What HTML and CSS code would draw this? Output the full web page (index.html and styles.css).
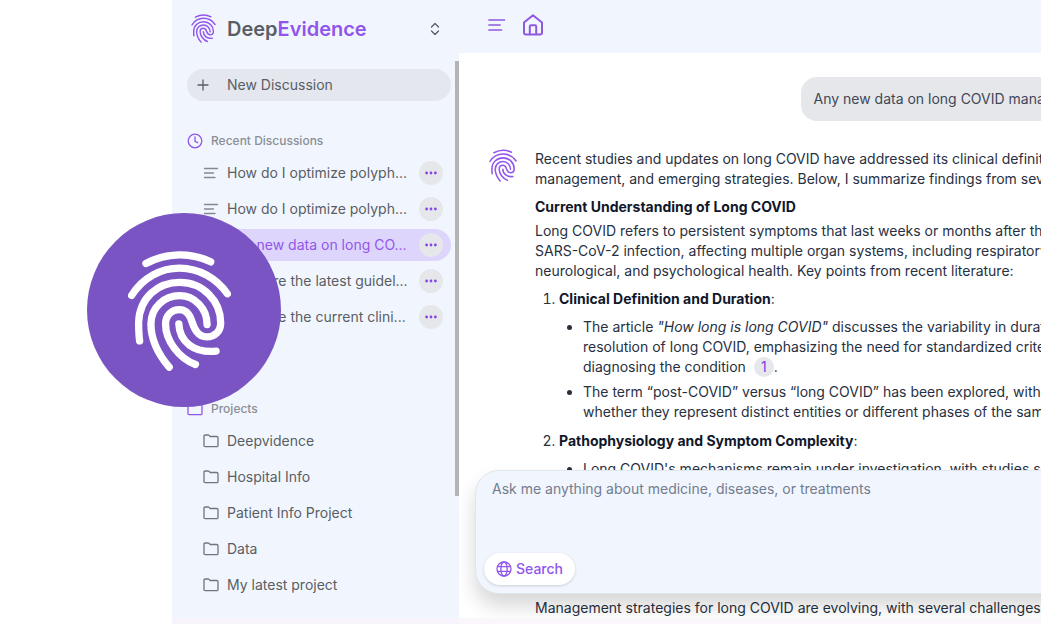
FILE: index.html
```html
<!DOCTYPE html>
<html lang="en">
<head>
<meta charset="utf-8">
<title>DeepEvidence</title>
<link rel="stylesheet" href="styles.css">
</head>
<body>
<svg class="sprite" aria-hidden="true">
  <symbol id="fingerprint" viewBox="145 133 310 363">
    <path d="M199 173C262 139 335 139 394 168"/>
    <path d="M156 269C190 215 245 187 300 187C360 187 412 218 444 264"/>
    <path d="M180 406C177 385 177 365 177 350C180 275 235 230 301 230C370 230 424 285 424 352C424 378 406 394 382 394C355 394 345 370 338 350C331 325 320 312 300 312C275 312 258 330 258 355C258 405 298 458 348 477"/>
    <path d="M269 485C235 445 214 405 214 355C214 305 255 270 300 270C345 270 383 308 383 357"/>
    <path d="M298 355C300 410 345 443 410 437"/>
  </symbol>
  <symbol id="lines" viewBox="0 0 16 16"><path d="M1.500 3.500h13M1.500 8h9M1.500 12.500h10.500"/></symbol>
  <symbol id="dots" viewBox="0 0 16 16"><circle cx="3" cy="8" r="1.600"/><circle cx="8" cy="8" r="1.600"/><circle cx="13" cy="8" r="1.600"/></symbol>
  <symbol id="folder" viewBox="0 0 16 16"><path d="M1 12.500V3.200Q1 2 2.200 2h2.900q.6 0 1 .4l1 1.100h6.500q1.400 0 1.400 1.400v7.600q0 1.200-1.200 1.200H2.200Q1 13.700 1 12.500z"/></symbol>
</svg>

<div class="app">
  <aside class="sidebar">
    <header class="brand">
      <svg class="brand-logo"><use href="#fingerprint"/></svg>
      <h1 class="brand-name">Deep<span class="accent">Evidence</span></h1>
      <button class="icon-button switcher" aria-label="Switch workspace">
        <svg class="icon" viewBox="0 0 16 16"><path d="M4.500 6 8 2.500 11.500 6M4.500 10 8 13.500 11.500 10"/></svg>
      </button>
    </header>
    <div class="sidebar-body">
      <nav class="nav">
        <button class="new-discussion">
          <svg class="icon" viewBox="0 0 16 16"><path d="M8 3v10M3 8h10"/></svg>
          New Discussion
        </button>

        <section class="group recent">
          <h2 class="group-title">
            <svg class="icon accent" viewBox="0 0 16 16"><circle cx="8" cy="8" r="6.800"/><path d="M8 4v4.300l2.600 1.300"/></svg>
            Recent Discussions
          </h2>
          <ul class="rows">
            <li class="row"><svg class="icon list-icon"><use href="#lines"/></svg><a class="row-link" href="#">How do I optimize polyph...</a><button class="more" aria-label="More options"><svg class="icon"><use href="#dots"/></svg></button></li>
            <li class="row"><svg class="icon list-icon"><use href="#lines"/></svg><a class="row-link" href="#">How do I optimize polyph...</a><button class="more" aria-label="More options"><svg class="icon"><use href="#dots"/></svg></button></li>
            <li class="row row-active"><svg class="icon list-icon"><use href="#lines"/></svg><a class="row-link" href="#">Any new data on long CO...</a><button class="more" aria-label="More options"><svg class="icon"><use href="#dots"/></svg></button></li>
            <li class="row"><svg class="icon list-icon"><use href="#lines"/></svg><a class="row-link" href="#">What are the latest guidel...</a><button class="more" aria-label="More options"><svg class="icon"><use href="#dots"/></svg></button></li>
            <li class="row"><svg class="icon list-icon"><use href="#lines"/></svg><a class="row-link" href="#">What are the current clini...</a><button class="more" aria-label="More options"><svg class="icon"><use href="#dots"/></svg></button></li>
          </ul>
        </section>

        <section class="group projects">
          <h2 class="group-title"><svg class="icon accent"><use href="#folder"/></svg>Projects</h2>
          <ul class="rows">
            <li class="row"><svg class="icon folder-icon"><use href="#folder"/></svg><a class="row-link" href="#">Deepvidence</a></li>
            <li class="row"><svg class="icon folder-icon"><use href="#folder"/></svg><a class="row-link" href="#">Hospital Info</a></li>
            <li class="row"><svg class="icon folder-icon"><use href="#folder"/></svg><a class="row-link" href="#">Patient Info Project</a></li>
            <li class="row"><svg class="icon folder-icon"><use href="#folder"/></svg><a class="row-link" href="#">Data</a></li>
            <li class="row"><svg class="icon folder-icon"><use href="#folder"/></svg><a class="row-link" href="#">My latest project</a></li>
          </ul>
        </section>
      </nav>
      <div class="scroll-thumb"></div>
    </div>
  </aside>

  <main class="main">
    <header class="toolbar">
      <button class="icon-button" aria-label="Toggle sidebar">
        <svg class="toolbar-menu" viewBox="0 0 18 14"><path d="M1 2h15.500M1 7h11M1 12h12.500"/></svg>
      </button>
      <button class="icon-button" aria-label="Home">
        <svg class="toolbar-home" viewBox="0 0 22 22"><path d="M2 8.500 11 1.200l9 7.300V18.500q0 2-2 2H4q-2 0-2-2zM7.800 20.500v-8q0-1.200 1.200-1.200h4q1.200 0 1.200 1.200v8"/></svg>
      </button>
    </header>

    <div class="conversation">
      <p class="question">Any new data on long COVID management?</p>
      <article class="answer">
        <svg class="avatar"><use href="#fingerprint"/></svg>
        <div class="prose">
          <p>Recent studies and updates on long COVID have addressed its clinical definition,<br>management, and emerging strategies. Below, I summarize findings from several</p>
          <h3>Current Understanding of Long COVID</h3>
          <p>Long COVID refers to persistent symptoms that last weeks or months after the<br>SARS-CoV-2 infection, affecting multiple organ systems, including respiratory,<br>neurological, and psychological health. Key points from recent literature:</p>
          <ol>
            <li><strong>Clinical Definition and Duration</strong>:
              <ul>
                <li>The article <em>"How long is long COVID"</em> discusses the variability in duration<br>resolution of long COVID, emphasizing the need for standardized criteria<br>diagnosing the condition <a class="cite" href="#">1</a>.</li>
                <li>The term “post-COVID” versus “long COVID” has been explored, with<br>whether they represent distinct entities or different phases of the same</li>
              </ul>
            </li>
            <li><strong>Pathophysiology and Symptom Complexity</strong>:
              <ul>
                <li>Long COVID's mechanisms remain under investigation, with studies suggesting</li>
              </ul>
            </li>
          </ol>
          <p class="management">Management strategies for long COVID are evolving, with several challenges</p>
        </div>
      </article>
    </div>

    <form class="composer">
      <textarea class="prompt" aria-label="Message" placeholder="Ask me anything about medicine, diseases, or treatments"></textarea>
      <button class="search" type="button">
        <svg class="icon" viewBox="0 0 16 16"><circle cx="8" cy="8" r="7"/><ellipse cx="8" cy="8" rx="3.200" ry="7"/><path d="M1.500 5.700h13M1.500 10.300h13"/></svg>
        Search
      </button>
    </form>
  </main>

  <div class="badge"><svg class="badge-print"><use href="#fingerprint"/></svg></div>
</div>
</body>
</html>
```

FILE: styles.css
```css
* { box-sizing: border-box; }

body {
  margin: 0;
  background: #fff;
  color: #28303f;
  font: 14px/20px Inter, sans-serif;
}

h1, h2, h3, p, ul, ol { margin: 0; padding: 0; font-size: inherit; }
button { border: 0; padding: 0; background: none; font: inherit; color: inherit; }
a { color: inherit; text-decoration: none; }
svg { display: block; flex: none; fill: none; stroke: currentColor; stroke-linecap: round; stroke-linejoin: round; }

.sprite { position: absolute; width: 0; height: 0; }
.icon { width: 16px; height: 16px; stroke-width: 1.3; }
.accent { color: #9155ec; }

.app {
  position: relative;
  display: flex;
  height: 100vh;
  padding-left: 172px;
  overflow: hidden;
}

/* Sidebar */
.sidebar {
  display: flex;
  flex-direction: column;
  flex: none;
  width: 287px;
  background: #f1f6fe;
  border-bottom: 6px solid #f7f4fb;
  color: #5a5e64;
}
.brand {
  display: flex;
  align-items: center;
  height: 61px;
  padding: 0 16px 4px 19px;
}
.brand-logo { width: 25px; height: 29px; stroke-width: 18; color: #9155ec; }
.brand-name { flex: 1; margin-left: 11px; font-size: 20px; line-height: 28px; font-weight: 600; }
.switcher { width: 16px; height: 16px; }

.sidebar-body { display: flex; align-items: flex-start; }
.nav { flex: 1; min-width: 0; padding: 8px 4px 0 15px; }
.scroll-thumb { width: 4px; height: 435px; background: #b4b4b5; }

.new-discussion {
  display: flex;
  align-items: center;
  gap: 16px;
  width: 100%;
  height: 32px;
  padding: 0 8px;
  border-radius: 16px;
  background: #e4e7ee;
}
.recent { margin-top: 30px; }
.projects { margin-top: 66px; }
.group-title {
  display: flex;
  align-items: center;
  gap: 8px;
  font-size: 12px;
  font-weight: 500;
  color: #8a8e95;
}
.rows {
  display: flex;
  flex-direction: column;
  gap: 4px;
  margin-top: 6px;
  list-style: none;
}
.row {
  display: flex;
  align-items: center;
  gap: 8px;
  height: 32px;
  padding: 0 8px 0 16px;
  border-radius: 16px;
}
.row-active { background: #ded5fc; color: #9155ec; }
.row-link { flex: 1; white-space: nowrap; }
.list-icon { color: #85888f; }
.folder-icon { color: #70747b; }
.more {
  display: grid;
  place-items: center;
  width: 24px;
  height: 24px;
  border-radius: 50%;
  background: #e6e7eb;
  color: #8348e4;
}
.more .icon { width: 14px; height: 14px; fill: currentColor; stroke: none; }

/* Main column */
.main {
  position: relative;
  display: flex;
  flex-direction: column;
  flex: 1;
  min-width: 0;
  overflow: hidden;
  border-bottom: 6px solid #faf6fb;
}
.toolbar {
  display: flex;
  align-items: center;
  flex: none;
  gap: 16px;
  height: 53px;
  padding: 0 29px 3px;
  background: #f1f6fe;
  color: #8f58e0;
}
.toolbar-menu { width: 18px; height: 14px; stroke-width: 1.7; }
.toolbar-home { width: 22px; height: 22px; stroke-width: 2; }

.conversation {
  display: flex;
  flex-direction: column;
  gap: 28px;
  min-width: 660px;
  padding: 24px 5px 0 30px;
  white-space: nowrap;
}
.question {
  align-self: flex-end;
  padding: 12px;
  border-radius: 16px;
  background: #e5e7eb;
  color: #414858;
}
.answer { display: flex; gap: 18px; }
.avatar { width: 28px; height: 33px; stroke-width: 17; color: #9155ec; }
.prose { flex: 1; }
.prose h3, .prose strong { font-weight: 700; color: #10172a; }
.prose h3 { margin: 8px 0 4px; }
.prose ol { margin-top: 8px; padding-left: 24px; }
.prose ol > li + li { margin-top: 9px; }
.prose ul { margin-top: 8px; padding-left: 24px; list-style: disc; }
.prose ul li + li { margin-top: 5px; }
.cite {
  display: inline-block;
  width: 20px;
  margin: 0 0 0 4px;
  border-radius: 50%;
  background: #e5e7eb;
  color: #7c3aed;
  text-align: center;
}
.prose .management { margin-top: 119px; }

/* Composer floats over the conversation */
.composer {
  position: absolute;
  left: 16px;
  right: -32px;
  bottom: 24px;
  display: flex;
  flex-direction: column;
  align-items: flex-start;
  padding: 8px;
  border: 1px solid #e0e6ed;
  border-radius: 24px;
  background: #f1f6fe;
  box-shadow: 0 12px 20px rgba(0, 0, 0, 0.16);
}
.prompt {
  width: 100%;
  height: 74px;
  padding: 0 8px;
  border: 0;
  outline: 0;
  resize: none;
  background: transparent;
  font: inherit;
}
.prompt::placeholder { color: #737c8e; opacity: 1; }
.search {
  display: flex;
  align-items: center;
  gap: 4px;
  height: 32px;
  padding: 0 12px;
  border-radius: 16px;
  background: #fff;
  box-shadow: 0 1px 3px rgba(0, 0, 0, 0.16);
  color: #9155ec;
  font-weight: 500;
}

/* Round brand badge overlapping the sidebar edge */
.badge {
  position: absolute;
  left: 87px;
  top: 213px;
  display: grid;
  place-items: center;
  width: 194px;
  height: 194px;
  border-radius: 50%;
  background: #7b54c4;
  color: #fff;
}
.badge-print { width: 103px; height: 121px; margin-right: 9px; stroke-width: 22; }
```
